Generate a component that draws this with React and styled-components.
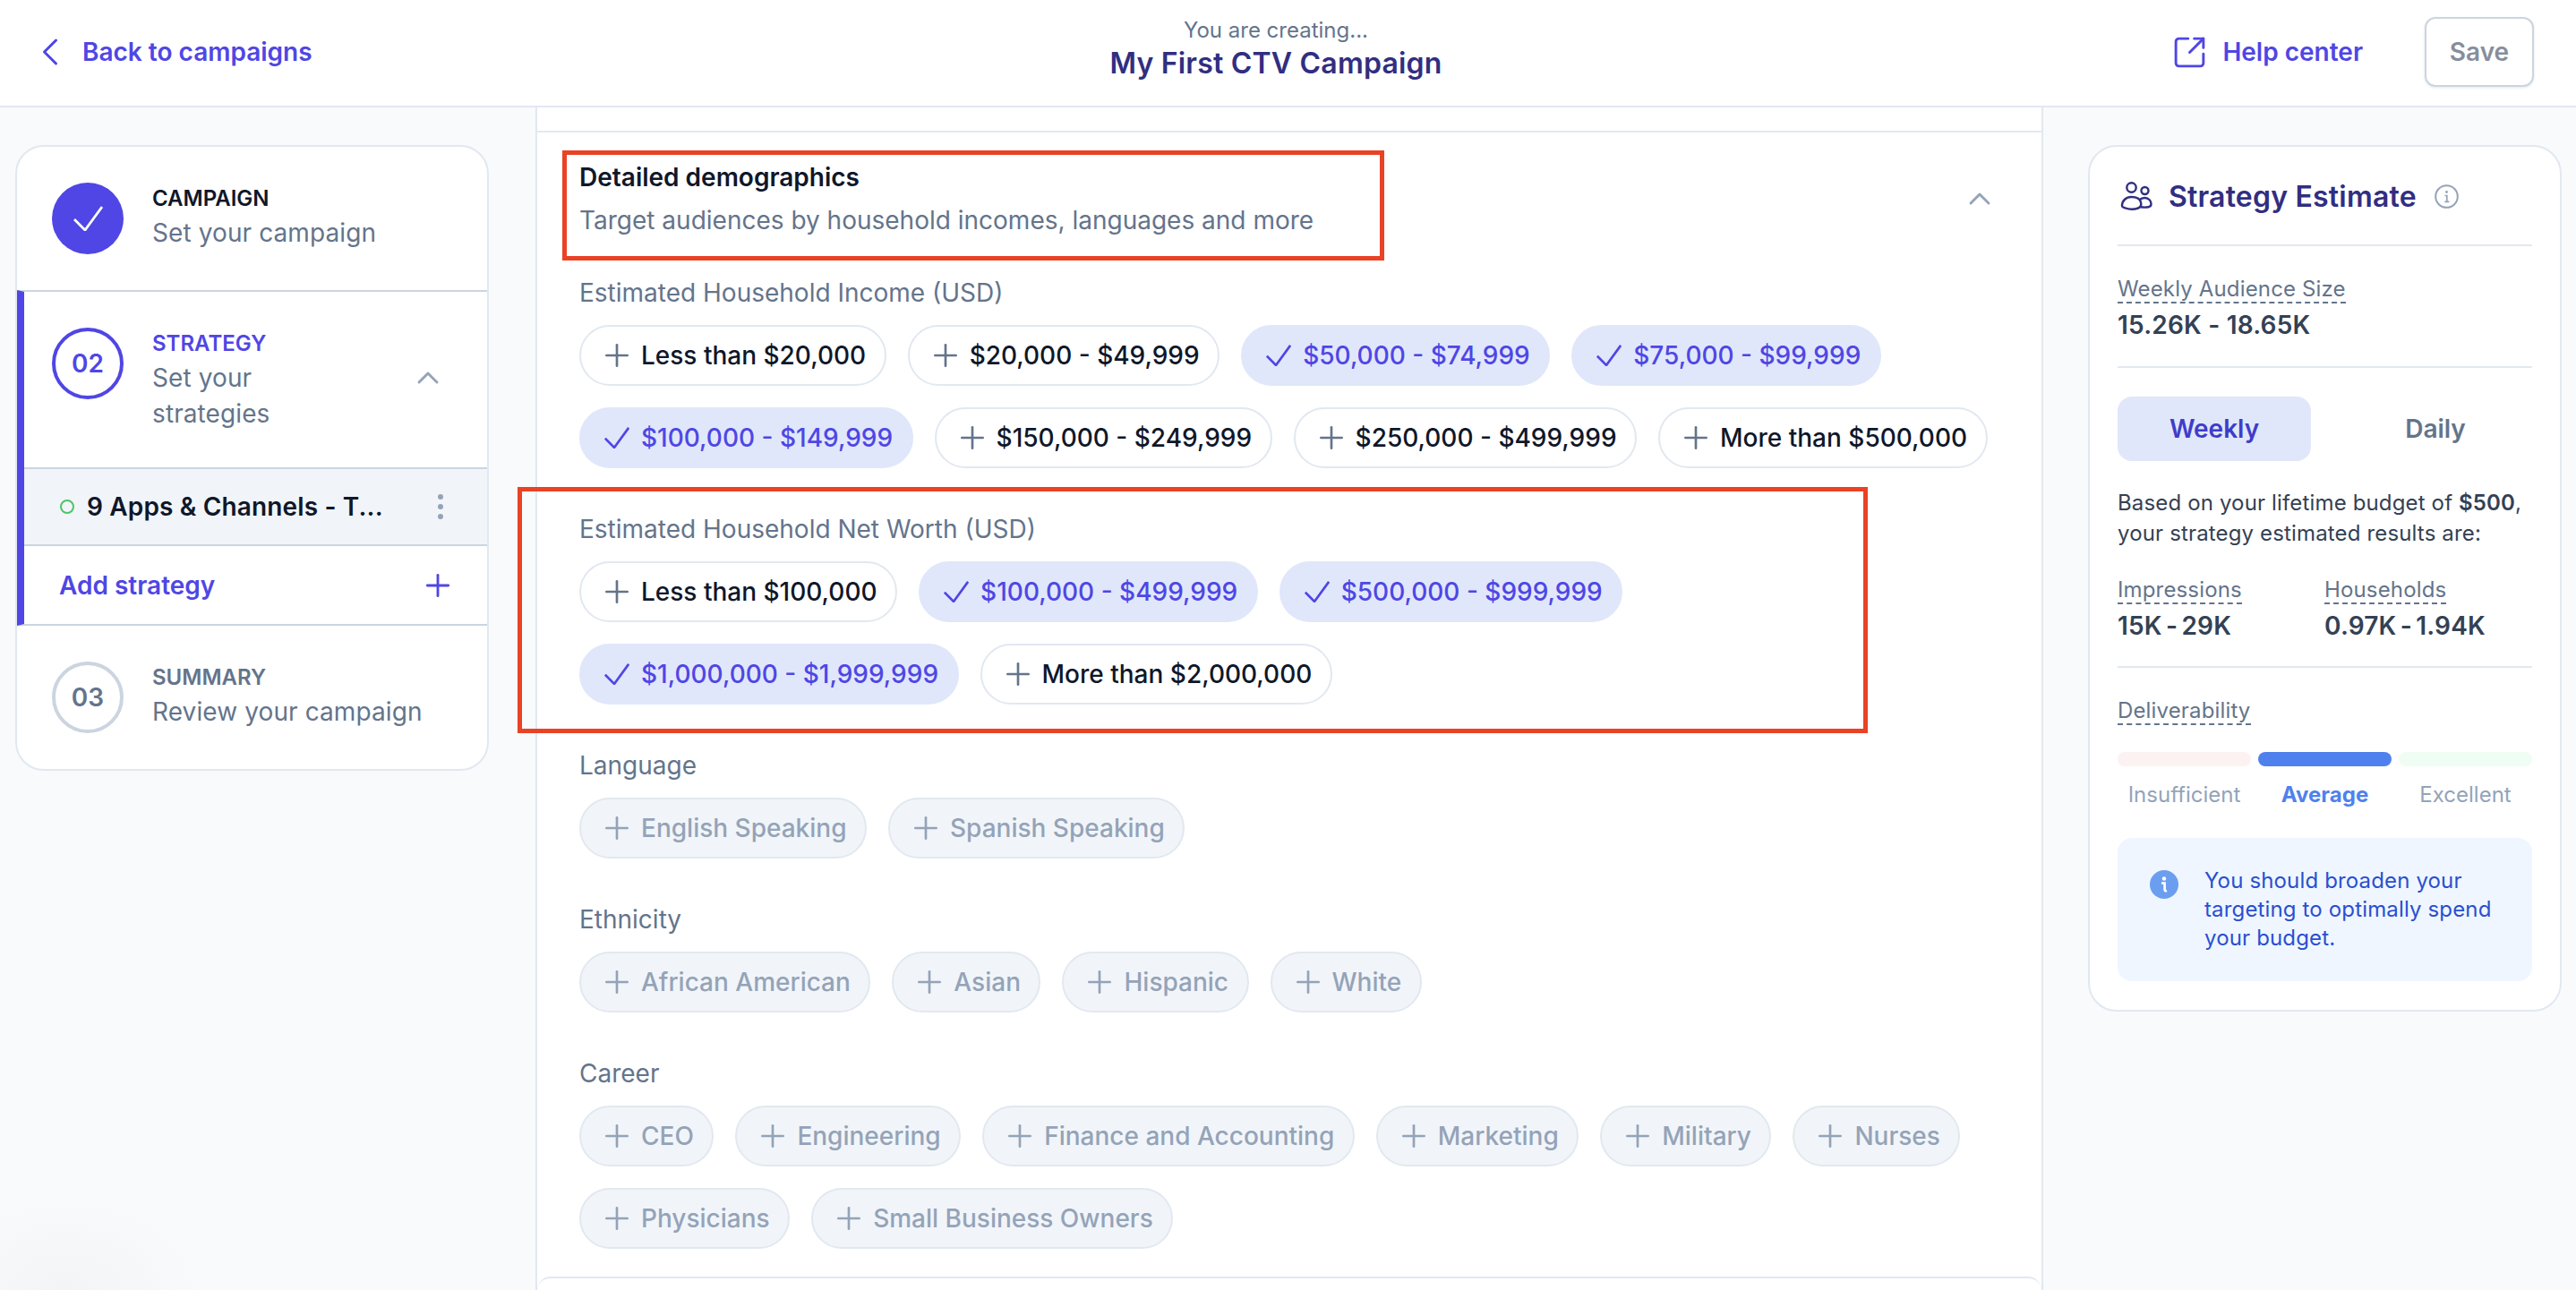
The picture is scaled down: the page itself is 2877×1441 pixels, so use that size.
import React from 'react';
import styled, { createGlobalStyle } from 'styled-components';
import { Plus, ChevronUp, ChevronLeft, SquareArrowOutUpRight } from 'lucide-react';

const GlobalStyle = createGlobalStyle`
  html, body {
    margin: 0;
    padding: 0;
    background: #f8fafc;
  }
  body {
    font-family: Inter, "Liberation Sans", sans-serif;
    color: #0f172a;
    -webkit-font-smoothing: antialiased;
  }
  * {
    box-sizing: border-box;
  }
`;

const INCOME = [
  ['Less than $20,000'],
  ['$20,000 - $49,999'],
  ['$50,000 - $74,999', 'on'],
  ['$75,000 - $99,999', 'on'],
  ['$100,000 - $149,999', 'on'],
  ['$150,000 - $249,999'],
  ['$250,000 - $499,999'],
  ['More than $500,000'],
];

const NET_WORTH = [
  ['Less than $100,000'],
  ['$100,000 - $499,999', 'on'],
  ['$500,000 - $999,999', 'on'],
  ['$1,000,000 - $1,999,999', 'on'],
  ['More than $2,000,000'],
];

const LANGUAGE = ['English Speaking', 'Spanish Speaking'];
const ETHNICITY = ['African American', 'Asian', 'Hispanic', 'White'];
const CAREER = [
  'CEO',
  'Engineering',
  'Finance and Accounting',
  'Marketing',
  'Military',
  'Nurses',
  'Physicians',
  'Small Business Owners',
];

function CheckMark({ size = 28, color = 'currentColor', weight = 3.2 }) {
  return (
    <svg width={size} height={size * 0.85} viewBox="0 0 33 28" fill="none" stroke={color} strokeWidth={weight}>
      <path d="M1 15 13 27 32 1" />
    </svg>
  );
}

function UsersIcon() {
  return (
    <svg width="36" height="32" viewBox="0 0 36 32" fill="none" stroke="#312e81" strokeWidth="2.4">
      <circle cx="12.5" cy="6.5" r="5.2" />
      <circle cx="27.5" cy="10" r="4" />
      <path d="M2 27c0-6 4.5-10 10.5-10S22 19 23 23c.6 2.6 0 5.5-3 6.5-4.500 1.500-10 1.500-14 0C3.500 28.800 2 28.500 2 27Z" />
      <path d="M21 20.500c1.800-1.500 4-2.500 6.500-2.500 4.500 0 7 3.500 7 7 0 1.800-1 2.800-3 3.200-2 .4-6 .4-8.500 0" />
    </svg>
  );
}

function InfoOutline() {
  return (
    <svg width="27" height="27" viewBox="0 0 27 27" fill="none">
      <circle cx="13.500" cy="13.500" r="12.300" stroke="#94a3b8" strokeWidth="2" />
      <circle cx="13.500" cy="8.500" r="1.400" fill="#94a3b8" />
      <path d="M11.500 12.500h2.300v6.500M11.300 19.300h5" stroke="#94a3b8" strokeWidth="1.700" />
    </svg>
  );
}

function InfoSolid() {
  return (
    <svg width="32" height="32" viewBox="0 0 32 32">
      <circle cx="16" cy="16" r="16" fill="#6c9ef0" />
      <circle cx="16" cy="9.500" r="2.200" fill="#fff" />
      <path d="M13 14.500h3.600v7.500c0 1 .8 1.500 2.400 1" fill="none" stroke="#fff" strokeWidth="2.600" />
    </svg>
  );
}

function Chip({ label, state }) {
  const selected = state === 'on';
  return (
    <ChipBox $state={state}>
      <ChipIcon>
        {selected ? <CheckMark size={28} /> : <Plus size={40} strokeWidth={1.6} />}
      </ChipIcon>
      {label}
    </ChipBox>
  );
}

function ChipGroup({ title, items }) {
  return (
    <Group>
      <GroupLabel>{title}</GroupLabel>
      <ChipWrap>{items}</ChipWrap>
    </Group>
  );
}

export default function App() {
  return (
    <>
      <GlobalStyle />
      <Page>
        <TopBar>
          <BackLink>
            <ChevronLeft size={52} strokeWidth={1.4} />
            <span>Back to campaigns</span>
          </BackLink>
          <TitleBlock>
            <Creating>You are creating...</Creating>
            <CampaignName>My First CTV Campaign</CampaignName>
          </TitleBlock>
          <TopActions>
            <HelpLink>
              <SquareArrowOutUpRight size={41} strokeWidth={1.7} />
              <span>Help center</span>
            </HelpLink>
            <SaveButton>Save</SaveButton>
          </TopActions>
        </TopBar>

        <Columns>
          <LeftRail>
            <StepCard>
              <StepRow>
                <DoneCircle>
                  <CheckMark size={33} color="#fff" weight={2.8} />
                </DoneCircle>
                <StepText>
                  <StepName>CAMPAIGN</StepName>
                  <StepSub>Set your campaign</StepSub>
                </StepText>
              </StepRow>
              <ActiveStep>
                <StepRow $active>
                  <NumberCircle $active>02</NumberCircle>
                  <StepText>
                    <StepName $tone="#4f46e5">STRATEGY</StepName>
                    <StepSub>Set your<br />strategies</StepSub>
                  </StepText>
                  <StepChevron>
                    <ChevronUp size={40} strokeWidth={1.7} />
                  </StepChevron>
                </StepRow>
                <StrategyRow>
                  <StatusDot />
                  <StrategyName>9 Apps &amp; Channels - T...</StrategyName>
                  <Kebab>
                    <i />
                    <i />
                    <i />
                  </Kebab>
                </StrategyRow>
                <AddRow>
                  <span>Add strategy</span>
                  <Plus size={40} strokeWidth={1.7} />
                </AddRow>
              </ActiveStep>
              <StepRow>
                <NumberCircle>03</NumberCircle>
                <StepText>
                  <StepName $tone="#64748b">SUMMARY</StepName>
                  <StepSub>Review your campaign</StepSub>
                </StepText>
              </StepRow>
            </StepCard>
          </LeftRail>

          <Middle>
            <PrevEdge />
            <DetailPanel>
              <DetailHead>
                <div>
                  <DetailTitle>Detailed demographics</DetailTitle>
                  <DetailSub>Target audiences by household incomes, languages and more</DetailSub>
                </div>
                <HeadChevron>
                  <ChevronUp size={40} strokeWidth={1.7} />
                </HeadChevron>
              </DetailHead>
              <Groups>
                <ChipGroup
                  title="Estimated Household Income (USD)"
                  items={INCOME.map(([label, state]) => (
                    <Chip key={label} label={label} state={state} />
                  ))}
                />
                <ChipGroup
                  title="Estimated Household Net Worth (USD)"
                  items={NET_WORTH.map(([label, state]) => (
                    <Chip key={label} label={label} state={state} />
                  ))}
                />
                <ChipGroup
                  title="Language"
                  items={LANGUAGE.map((label) => (
                    <Chip key={label} label={label} state="off" />
                  ))}
                />
                <ChipGroup
                  title="Ethnicity"
                  items={ETHNICITY.map((label) => (
                    <Chip key={label} label={label} state="off" />
                  ))}
                />
                <ChipGroup
                  title="Career"
                  items={CAREER.map((label) => (
                    <Chip key={label} label={label} state="off" />
                  ))}
                />
              </Groups>
            </DetailPanel>
            <NextCard />
            <HighlightOne />
            <HighlightTwo />
          </Middle>

          <RightRail>
            <EstimateCard>
              <EstimateHead>
                <UsersIcon />
                <EstimateTitle>Strategy Estimate</EstimateTitle>
                <InfoOutline />
              </EstimateHead>
              <Rule />
              <MetricLabel>Weekly Audience Size</MetricLabel>
              <MetricValue>15.26K - 18.65K</MetricValue>
              <Rule $top="28px" />
              <Tabs>
                <Tab $active>Weekly</Tab>
                <Tab>Daily</Tab>
              </Tabs>
              <BudgetNote>
                Based on your lifetime budget of <b>$500</b>,<br />
                your strategy estimated results are:
              </BudgetNote>
              <MetricPair>
                <div>
                  <MetricLabel>Impressions</MetricLabel>
                  <MetricValue $tight>15K - 29K</MetricValue>
                </div>
                <div>
                  <MetricLabel>Households</MetricLabel>
                  <MetricValue $tight>0.97K - 1.94K</MetricValue>
                </div>
              </MetricPair>
              <Rule $top="27px" />
              <MetricLabel>Deliverability</MetricLabel>
              <Meter>
                <MeterCell>
                  <MeterBar $color="#fdf2f2" />
                  <MeterText>Insufficient</MeterText>
                </MeterCell>
                <MeterCell>
                  <MeterBar $color="#4f81ee" />
                  <MeterText $active>Average</MeterText>
                </MeterCell>
                <MeterCell>
                  <MeterBar $color="#f0fdf4" />
                  <MeterText>Excellent</MeterText>
                </MeterCell>
              </Meter>
              <Notice>
                <NoticeIcon>
                  <InfoSolid />
                </NoticeIcon>
                <span>You should broaden your targeting to optimally spend your budget.</span>
              </Notice>
            </EstimateCard>
          </RightRail>
        </Columns>
      </Page>
    </>
  );
}

const Page = styled.div`
  width: 2877px;
  height: 1441px;
  overflow: hidden;
  display: flex;
  flex-direction: column;
  background: #f8fafc;
`;

const TopBar = styled.header`
  height: 120px;
  flex: none;
  display: grid;
  grid-template-columns: 1fr auto 1fr;
  align-items: center;
  padding: 0 47px 2px 20px;
  background: #fff;
  border-bottom: 2px solid #e2e8f0;
`;

const BackLink = styled.a`
  display: flex;
  align-items: center;
  gap: 10px;
  margin-left: 10px;
  font-size: 28px;
  font-weight: 600;
  color: #4f46e5;
`;

const TitleBlock = styled.div`
  align-self: start;
  padding-top: 18px;
  text-align: center;
`;

const Creating = styled.div`
  font-size: 24px;
  line-height: 32px;
  color: #64748b;
`;

const CampaignName = styled.div`
  margin-top: 1px;
  font-size: 32px;
  line-height: 40px;
  font-weight: 600;
  letter-spacing: 0.2px;
  color: #312e81;
`;

const TopActions = styled.div`
  display: flex;
  justify-content: flex-end;
  align-items: center;
  gap: 69px;
`;

const HelpLink = styled.a`
  display: flex;
  align-items: center;
  gap: 16px;
  font-size: 28px;
  font-weight: 600;
  color: #4f46e5;
`;

const SaveButton = styled.button`
  width: 122px;
  height: 78px;
  background: #fff;
  border: 2px solid #cbd5e1;
  border-radius: 12px;
  box-shadow: 0 1px 3px rgba(15, 23, 42, 0.1);
  font-family: inherit;
  font-size: 28px;
  font-weight: 600;
  color: #868e9c;
`;

const Columns = styled.div`
  flex: 1;
  min-height: 0;
  display: grid;
  grid-template-columns: 598px 1684px 1fr;
`;

const LeftRail = styled.aside`
  padding: 42px 0 0 17px;
  background: radial-gradient(ellipse 150px 100px at 73px 100%, #f3f4f6, rgba(248, 250, 252, 0));
`;

const StepCard = styled.div`
  width: 529px;
  background: #fff;
  border: 2px solid #e2e8f0;
  border-radius: 32px;
  overflow: hidden;
`;

const StepRow = styled.div`
  display: flex;
  gap: 32px;
  padding: 40px 0 40px ${(props) => (props.$active ? '31px' : '39px')};
  position: relative;
`;

const DoneCircle = styled.div`
  width: 80px;
  height: 80px;
  flex: none;
  border-radius: 50%;
  background: #4f46e5;
  display: flex;
  align-items: center;
  justify-content: center;
`;

const NumberCircle = styled.div`
  width: 80px;
  height: 80px;
  flex: none;
  border-radius: 50%;
  border: 4px solid ${(props) => (props.$active ? '#4f46e5' : '#cbd5e1')};
  color: ${(props) => (props.$active ? '#4f46e5' : '#64748b')};
  display: flex;
  align-items: center;
  justify-content: center;
  font-size: 28px;
  font-weight: 600;
`;

const StepText = styled.div`
  display: flex;
  flex-direction: column;
`;

const StepName = styled.div`
  font-size: 24px;
  line-height: 36px;
  font-weight: 600;
  color: ${(props) => props.$tone || '#0f172a'};
`;

const StepSub = styled.div`
  font-size: 28px;
  line-height: 40px;
  letter-spacing: 0.1px;
  color: #64748b;
`;

const ActiveStep = styled.div`
  border-top: 2px solid #cbd5e1;
  border-bottom: 2px solid #cbd5e1;
  border-left: 8px solid #4f46e5;
`;

const StepChevron = styled.div`
  position: absolute;
  right: 46px;
  top: 76px;
  height: 40px;
  color: #94a3b8;
`;

const StrategyRow = styled.div`
  height: 88px;
  display: flex;
  align-items: center;
  padding: 0 49px 0 40px;
  background: #f1f5f9;
  border-top: 2px solid #cbd5e1;
  border-bottom: 2px solid #cbd5e1;
`;

const StatusDot = styled.span`
  width: 16px;
  height: 16px;
  flex: none;
  border-radius: 50%;
  border: 2px solid #4cc566;
  margin-right: 14px;
`;

const StrategyName = styled.span`
  flex: 1;
  font-size: 28px;
  font-weight: 600;
  letter-spacing: 0.15px;
  color: #0f172a;
  white-space: nowrap;
`;

const Kebab = styled.span`
  display: flex;
  flex-direction: column;
  gap: 5px;

  i {
    width: 6px;
    height: 6px;
    border-radius: 50%;
    background: #94a3b8;
  }
`;

const AddRow = styled.div`
  height: 87px;
  display: flex;
  align-items: center;
  justify-content: space-between;
  padding: 0 35px 0 39px;
  font-size: 28px;
  font-weight: 600;
  color: #4f46e5;
`;

const Middle = styled.main`
  position: relative;
  display: flex;
  flex-direction: column;
  background: #fff;
  border-left: 2px solid #e2e8f0;
  border-right: 2px solid #e2e8f0;
`;

const PrevEdge = styled.div`
  height: 28px;
  flex: none;
  border-bottom: 2px solid #e2e8f0;
`;

const DetailPanel = styled.section`
  padding: 30px 49px 31px 47px;
`;

const DetailHead = styled.div`
  display: flex;
  align-items: center;
  justify-content: space-between;
`;

const DetailTitle = styled.div`
  font-size: 28px;
  line-height: 40px;
  font-weight: 600;
  color: #0f172a;
`;

const DetailSub = styled.div`
  margin-top: 8px;
  font-size: 28px;
  line-height: 40px;
  color: #64748b;
`;

const HeadChevron = styled.div`
  height: 40px;
  color: #94a3b8;
`;

const Groups = styled.div`
  margin-top: 41px;
  display: flex;
  flex-direction: column;
  gap: 48px;
`;

const Group = styled.div``;

const GroupLabel = styled.div`
  font-size: 28px;
  line-height: 40px;
  color: #64748b;
`;

const ChipWrap = styled.div`
  margin-top: 16px;
  display: flex;
  flex-wrap: wrap;
  gap: 24px;
`;

const chipColors = {
  on: { bg: '#e0e7fa', border: '#e0e7fa', text: '#4f46e5', icon: '#4f46e5' },
  off: { bg: '#f1f5f9', border: '#e2e8f0', text: '#94a3b8', icon: '#94a3b8' },
  idle: { bg: '#fff', border: '#e2e8f0', text: '#0f172a', icon: '#64748b' },
};

const ChipBox = styled.div`
  height: 68px;
  display: flex;
  align-items: center;
  gap: 7px;
  padding: 0 20.5px 0 20px;
  border-radius: 34px;
  border: 2px solid ${(props) => chipColors[props.$state || 'idle'].border};
  background: ${(props) => chipColors[props.$state || 'idle'].bg};
  color: ${(props) => chipColors[props.$state || 'idle'].text};
  font-size: 28px;
  font-weight: 500;
  white-space: nowrap;

  svg {
    color: ${(props) => chipColors[props.$state || 'idle'].icon};
  }
`;

const ChipIcon = styled.span`
  width: 40px;
  height: 40px;
  flex: none;
  display: flex;
  align-items: center;
  justify-content: center;
`;

const NextCard = styled.div`
  flex: 1;
  border-top: 2px solid #e2e8f0;
  border-radius: 32px 32px 0 0;
`;

const Highlight = styled.div`
  position: absolute;
  border: 5px solid #ea4225;
  pointer-events: none;
`;

const HighlightOne = styled(Highlight)`
  left: 28px;
  top: 48px;
  width: 918px;
  height: 123px;
`;

const HighlightTwo = styled(Highlight)`
  left: -22px;
  top: 424px;
  width: 1508px;
  height: 275px;
`;

const RightRail = styled.aside`
  padding: 42px 16px 0 50px;
`;

const EstimateCard = styled.div`
  height: 968px;
  background: #fff;
  border: 2px solid #e2e8f0;
  border-radius: 32px;
  padding: 33px 31px;
`;

const EstimateHead = styled.div`
  height: 44px;
  display: flex;
  align-items: center;
  padding-left: 3px;
`;

const EstimateTitle = styled.div`
  margin: 0 20px 0 18px;
  font-size: 32px;
  font-weight: 600;
  letter-spacing: 0.2px;
  color: #312e81;
`;

const Rule = styled.div`
  height: 2px;
  background: #e2e8f0;
  margin: ${(props) => props.$top || '32px'} 0 32px;
`;

const MetricLabel = styled.div`
  display: inline-block;
  padding-top: 2px;
  font-size: 24px;
  line-height: 28px;
  letter-spacing: 0.15px;
  color: #64748b;
  border-bottom: 2px dashed #64748b;
`;

const MetricValue = styled.div`
  margin-top: 6px;
  font-size: 28px;
  line-height: 36px;
  font-weight: 600;
  letter-spacing: 0.2px;
  color: #334155;
  word-spacing: ${(props) => (props.$tight ? '-3px' : '0')};
`;

const Tabs = styled.div`
  display: grid;
  grid-template-columns: 216px 216px;
  gap: 31px;
`;

const Tab = styled.div`
  height: 72px;
  display: flex;
  align-items: center;
  justify-content: center;
  border-radius: 16px;
  background: ${(props) => (props.$active ? '#e0e7fa' : 'transparent')};
  color: ${(props) => (props.$active ? '#3f3cc9' : '#64748b')};
  font-size: 28px;
  font-weight: 600;
`;

const BudgetNote = styled.p`
  margin: 30px 0;
  font-size: 24px;
  line-height: 34px;
  letter-spacing: 0.15px;
  color: #334155;

  b {
    font-weight: 600;
  }
`;

const MetricPair = styled.div`
  display: grid;
  grid-template-columns: 231px 1fr;
`;

const Meter = styled.div`
  margin-top: 30px;
  display: grid;
  grid-template-columns: repeat(3, 1fr);
  gap: 8px;
`;

const MeterCell = styled.div`
  text-align: center;
`;

const MeterBar = styled.div`
  height: 16px;
  border-radius: 8px;
  background: ${(props) => props.$color};
`;

const MeterText = styled.div`
  margin-top: 16px;
  font-size: 24px;
  line-height: 32px;
  font-weight: ${(props) => (props.$active ? 700 : 400)};
  color: ${(props) => (props.$active ? '#4f81ee' : '#94a3b8')};
`;

const Notice = styled.div`
  margin-top: 32px;
  display: flex;
  gap: 29px;
  padding: 32px 24px 32px 36px;
  border-radius: 16px;
  background: #eff6ff;
  font-size: 24px;
  line-height: 32px;
  letter-spacing: 0.15px;
  color: #2a4fd0;
`;

const NoticeIcon = styled.div`
  flex: none;
  margin-top: 4px;
  height: 32px;
`;
